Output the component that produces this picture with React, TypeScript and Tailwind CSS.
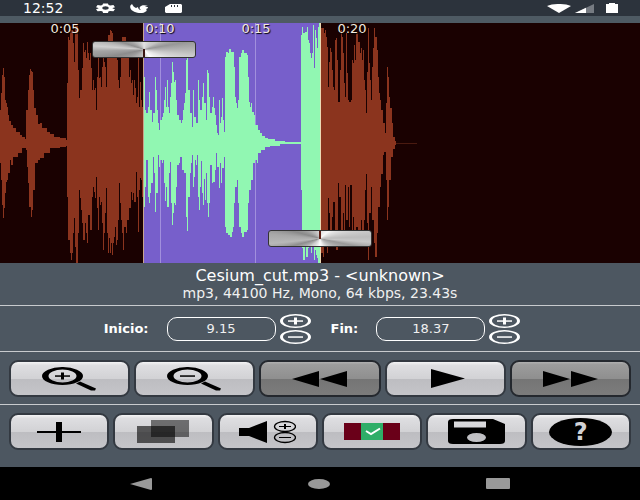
import React, { useState } from "react"
import { clsx } from "clsx"

// Envelope of the recording as "x level" pairs, measured up and down from the centre line
const UPPER =
  "0 33 1 50 2 68 3 75 4 66 5 43 6 40 7 36 8 28 9 22 11 18 13 15 16 11 20 8 22 6 25 4 26 33 28 53 29 68 30 74 31 72 32 71 33 53 34 35 36 28 38 19 40 20 42 15 45 15 47 11 50 9 54 6 60 5 66 3 " +
  "67 60 68 106 69 103 70 114 71 113 73 100 74 81 75 118 76 118 77 118 78 73 79 45 80 53 82 75 83 100 84 91 85 93 86 85 87 101 88 90 89 83 90 90 91 75 92 53 93 63 94 53 95 55 96 33 97 66 98 85 99 65 100 66 101 56 102 76 103 88 104 81 105 76 106 56 107 86 108 108 110 113 111 112 112 110 113 101 115 100 117 83 118 63 119 55 120 66 121 86 122 106 124 106 126 93 128 86 129 66 130 73 131 60 132 63 133 48 134 63 135 55 136 40 137 46 138 91 139 36 140 61 141 43 142 36 " +
  "144 66 145 33 146 30 148 36 149 51 150 33 152 21 153 30 155 66 156 53 157 33 158 20 159 13 160 23 162 26 163 30 164 43 165 56 166 36 167 63 168 36 169 30 170 46 171 60 172 81 173 71 174 61 175 63 176 43 177 28 179 23 181 20 182 23 183 33 184 40 185 50 186 83 187 86 188 53 190 30 192 16 193 53 194 26 196 20 198 63 199 43 200 33 202 46 203 60 204 40 206 23 207 73 208 70 209 46 210 30 212 36 " +
  "213 46 214 35 215 28 216 18 217 10 218 8 219 43 220 20 221 26 222 45 223 23 224 11 225 86 226 91 228 90 229 94 231 91 233 91 234 76 235 46 236 40 237 35 238 43 239 86 241 90 242 93 244 90 247 88 248 66 249 41 250 36 251 40 252 31 254 28 255 18 257 18 258 13 260 10 262 7 265 5 268 4 275 2 285 1 300 1 " +
  "301 108 302 116 303 110 305 111 307 116 308 103 309 100 310 90 311 85 312 90 313 118 314 75 315 113 316 105 317 95 318 116 319 120 " +
  "321 115 323 115 324 110 325 113 326 106 327 96 328 56 329 81 330 95 331 91 332 73 333 56 334 53 335 103 336 105 337 83 338 41 340 73 341 113 342 106 343 90 344 60 345 46 346 110 347 70 348 43 349 41 351 43 352 83 353 80 354 98 355 83 356 110 358 101 360 90 361 95 362 83 363 93 364 63 365 53 366 30 367 71 368 115 369 80 370 63 371 43 372 76 373 95 374 115 375 106 377 93 378 66 379 50 380 43 381 33 383 20 385 10 386 40 387 76 388 66 389 46 390 35 392 20 393 6 395 2"

const LOWER =
  "0 20 1 37 2 62 3 75 4 65 5 50 6 39 7 37 8 30 10 17 11 22 13 14 18 10 22 5 25 5 26 7 27 24 28 40 29 64 31 74 32 67 33 47 35 20 38 17 40 15 44 10 50 5 60 4 66 3 " +
  "67 54 68 97 70 110 71 117 72 110 73 90 74 75 75 104 76 120 77 120 78 90 79 47 80 55 81 67 82 80 83 97 84 97 85 80 86 90 87 100 88 72 90 87 92 54 93 44 94 49 95 55 96 34 97 65 98 87 99 54 100 62 101 59 102 80 103 107 104 90 105 70 106 45 107 90 108 110 109 95 110 110 111 100 112 112 113 100 114 94 115 84 116 102 117 97 118 77 119 40 120 60 121 77 122 90 123 107 124 84 126 90 127 77 128 77 129 65 131 49 132 57 133 50 134 59 136 29 137 54 138 89 139 47 140 35 141 37 142 54 " +
  "144 64 145 44 146 17 148 54 149 60 150 50 151 40 153 14 154 30 155 69 156 50 158 12 159 24 160 17 162 20 163 17 164 40 165 58 166 44 167 64 169 30 170 19 171 60 172 82 173 70 174 60 175 62 176 44 177 22 179 20 180 14 182 27 184 30 186 74 187 88 188 54 190 30 191 20 192 12 193 44 194 34 195 17 196 22 197 12 198 54 199 67 200 44 201 18 202 50 203 62 204 36 205 57 206 30 207 60 208 74 209 60 210 22 212 40 " +
  "213 39 215 27 216 10 217 24 219 45 220 20 221 40 222 25 224 14 225 84 226 90 228 92 230 94 232 89 233 84 234 60 235 44 237 37 238 60 239 84 241 90 242 94 244 89 247 87 248 60 249 47 251 37 252 37 253 20 255 17 257 20 258 10 261 7 265 4 270 3 280 1 300 1 " +
  "301 47 302 105 303 117 305 104 306 114 308 105 309 100 311 110 312 97 313 87 314 117 315 107 316 112 317 115 318 120 320 120 " +
  "321 110 323 114 324 104 326 87 327 110 328 55 329 70 330 90 332 74 333 59 335 97 336 107 338 40 339 54 341 97 343 70 344 87 345 42 346 77 348 44 349 84 350 42 352 90 353 74 354 100 356 84 358 97 361 77 362 97 364 77 365 47 366 31 367 80 368 117 369 70 371 44 372 77 374 100 375 114 377 90 378 64 380 44 381 31 383 12 384 9 386 37 387 77 388 64 389 37 391 14 393 6 395 2"

const envelope = (levels: string, direction: number) => {
  const values = levels.split(" ").map(Number)
  let d = "M0 120"
  for (let i = 0; i < values.length; i += 2) {
    d += `V${120 + direction * values[i + 1]}H${values[i + 2] ?? values[i] + 1}`
  }
  return d + "V120Z"
}

const WAVE = envelope(UPPER, -1) + envelope(LOWER, 1)

const TICKS = [
  { label: "0:05", at: 65 },
  { label: "0:10", at: 160 },
  { label: "0:15", at: 256 },
  { label: "0:20", at: 352 },
]

const percent = (x: number) => `${(x / 640) * 100}%`

function StatusBar() {
  return (
    <header className="flex h-4 items-center bg-[#2c333c] pl-[23px] pr-[22px] text-white">
      <span className="w-[73px] text-sm leading-4">12:52</span>
      <svg className="h-[10px] w-[19px]" viewBox="0 0 24 24" preserveAspectRatio="none" fill="currentColor">
        <path
          fillRule="evenodd"
          d="M9 1h6l1 4 2 1 4-1 2 5-3 2v1l3 2-2 5-4-1-2 1-1 4H9l-1-4-2-1-4 1-2-5 3-2v-1l-3-2 2-5 4 1 2-1zM12 8a4 4 0 1 0 0 8 4 4 0 0 0 0-8z"
        />
      </svg>
      <svg className="ml-[15px] h-[9px] w-[19px]" viewBox="0 0 19 9" fill="currentColor">
        <path d="M2 0C-1 2 0 5 3 7c3 2 9 3 12 1 2-1 2-2 1-3 1 0 2-1 2-2h-3c1-1 2-1 3-1-3-1-7-1-8 1-1 1 0 2 1 3-2 0-3-2-3-3l-2 1C4 3 3 2 2 0z" />
      </svg>
      <svg className="ml-4 h-[9px] w-[17px]" viewBox="0 0 17 9" fill="currentColor">
        <path fillRule="evenodd" d="M5 0h11l1 1v7l-1 1H1L0 8V3zM6 1v2h1V1zM9 1v2h1V1zM12 1v2h1V1z" />
      </svg>
      <svg className="ml-auto h-[9px] w-6" viewBox="0 0 24 9" fill="currentColor">
        <path d="M0 2C6-.7 18-.7 24 2L12 9z" />
      </svg>
      <svg className="ml-1 h-[9px] w-[19px]" viewBox="0 0 19 9">
        <path d="M0 9L19 0v9z" fill="#767b82" />
        <path d="M0 9L11 3.800V9z" fill="#fff" />
      </svg>
      <svg className="ml-3 h-[10px] w-3" viewBox="0 0 12 10" fill="currentColor">
        <path d="M0 1h3V0h6v1h3v9H0z" />
      </svg>
    </header>
  )
}

interface HandleProps {
  at: number
  label: string
  className: string
  notchClassName: string
}

const Handle: React.FC<HandleProps> = ({ at, label, className, notchClassName }) => (
  <button
    type="button"
    aria-label={label}
    style={{ left: percent(at) }}
    className={clsx(
      "absolute flex h-[17px] w-[104px] -translate-x-1/2 justify-center rounded-[3px] border border-[#333]",
      className
    )}
  >
    <span className={clsx("h-2 w-0.5", notchClassName)} />
  </button>
)

function Waveform() {
  return (
    <section className="relative h-60 bg-[#1a0101]">
      <svg
        className="block h-full w-full"
        viewBox="0 0 640 240"
        preserveAspectRatio="none"
        shapeRendering="crispEdges"
      >
        <defs>
          <clipPath id="selection">
            <rect x="144" y="0" width="176" height="240" />
          </clipPath>
        </defs>
        <path d={WAVE} fill="#8b341e" />
        <rect x="396" y="120" width="21" height="1" fill="#4a1a10" />
        <rect x="144" y="0" width="176" height="240" fill="#775fcb" />
        <rect x="160" y="0" width="1" height="240" fill="#a18fdd" />
        <rect x="255" y="0" width="1" height="240" fill="#a18fdd" />
        <path d={WAVE} fill="#91f7b2" clipPath="url(#selection)" />
        <rect x="143" y="0" width="1" height="240" fill="#c9a58c" />
        <rect x="320" y="0" width="1" height="240" fill="#ecd9b4" />
      </svg>
      {TICKS.map((tick) => (
        <span
          key={tick.label}
          style={{ left: percent(tick.at) }}
          className="absolute top-0 -translate-x-1/2 text-[13px] leading-3 text-[#f3e9df] [text-shadow:1px_1px_1px_#000]"
        >
          {tick.label}
        </span>
      ))}
      <Handle
        at={144}
        label="Inicio"
        className="top-[18px] items-end bg-[conic-gradient(#e4e4e4_0deg,#c4c4c4_60deg,#979797_80deg,#b4b4b4_90deg,#cacaca_97deg,#e4e4e4_110deg,#fff_140deg,#ccc_180deg,#aaa_230deg,#8c8c8c_258deg,#a4a4a4_268deg,#d0d0d0_274deg,#b8b8b8_280deg,#909090_288deg,#b4b4b4_310deg,#e4e4e4_360deg)]"
        notchClassName="bg-[#3a1512]"
      />
      <Handle
        at={320}
        label="Fin"
        className="bottom-4 items-start bg-[conic-gradient(#ddd_0deg,#f8f8f8_50deg,#d4d4d4_75deg,#bcbcbc_88deg,#c8c8c8_94deg,#9a9a9a_102deg,#b4b4b4_120deg,#eee_160deg,#fff_180deg,#ccc_230deg,#8e8e8e_255deg,#b8b8b8_264deg,#a8a8a8_275deg,#8a8a8a_285deg,#b0b0b0_310deg,#ddd_360deg)]"
        notchClassName="bg-[#5d1f16]"
      />
    </section>
  )
}

function RoundSign({ plus }: { plus?: boolean }) {
  return (
    <svg className="block h-[14px] w-[31px]" viewBox="0 0 31 14" fill="#fff">
      <path
        fillRule="evenodd"
        d="M0 7a15.500 7 0 1 0 31 0a15.500 7 0 1 0-31 0M3 7a12.500 5.500 0 1 0 25 0a12.500 5.500 0 1 0-25 0"
      />
      <rect x="8" y="6.300" width="15" height="1.500" />
      {plus && <rect x="14" y="3.500" width="3" height="7" />}
    </svg>
  )
}

interface TimeFieldProps {
  id: string
  label: string
  initial: number
}

const TimeField: React.FC<TimeFieldProps> = ({ id, label, initial }) => {
  const [value, setValue] = useState(initial.toFixed(2))

  const step = (amount: number) => setValue((Number(value) + amount).toFixed(2))

  return (
    <div className="flex items-center">
      <label htmlFor={id} className="mr-[18px] text-[13px] font-bold">
        {label}
      </label>
      <input
        id={id}
        type="text"
        inputMode="decimal"
        value={value}
        onChange={(e) => setValue(e.target.value)}
        className="h-6 w-[109px] rounded-[10px] border border-white bg-transparent text-center text-[13px] text-[#f0f0f0]"
      />
      <div className="ml-1 flex flex-col gap-0.5">
        <button type="button" aria-label={`${label} +`} onClick={() => step(0.01)}>
          <RoundSign plus />
        </button>
        <button type="button" aria-label={`${label} -`} onClick={() => step(-0.01)}>
          <RoundSign />
        </button>
      </div>
    </div>
  )
}

interface ToolButtonProps {
  label: string
  disabled?: boolean
  children: React.ReactNode
}

const ToolButton: React.FC<ToolButtonProps> = ({ label, disabled, children }) => (
  <button
    type="button"
    aria-label={label}
    disabled={disabled}
    className={clsx(
      "flex h-[37px] flex-1 items-center justify-center rounded-[9px] border-2 text-black",
      disabled
        ? "border-[#24282e] bg-[linear-gradient(#b0b0b0_0%,#9c9c9c_8%,#8f8f8f_50%,#757575_51%,#7c7c7c_100%)]"
        : "border-[#333941] bg-[linear-gradient(#f4f4f5_0%,#dedee1_10%,#d2d2d5_50%,#bdbdc1_51%,#c5c5c9_100%)]"
    )}
  >
    {children}
  </button>
)

function Magnifier({ plus }: { plus?: boolean }) {
  return (
    <svg className="h-6 w-[55px]" viewBox="0 0 55 24">
      <path
        fillRule="evenodd"
        d="M0 9a20.500 9 0 1 0 41 0a20.500 9 0 1 0-41 0M6.500 9a14 6.500 0 1 0 28 0a14 6.500 0 1 0-28 0"
      />
      <path d="M34 16.500l4-2 16 7-1 2h-4z" />
      <rect x="13" y="8.300" width="15" height="1.500" />
      {plus && <rect x="19" y="5.500" width="3" height="7" />}
    </svg>
  )
}

function SoundIcon() {
  return (
    <svg className="h-6 w-[57px]" viewBox="0 0 57 24">
      <path d="M0 8h10L28 1v22L10 16H0z" />
      <g fill="none" stroke="#000">
        <ellipse cx="46" cy="6.500" rx="10.500" ry="5" strokeWidth="1.300" />
        <ellipse cx="46" cy="17.500" rx="10.500" ry="5" strokeWidth="1.300" />
        <path d="M40 6.500h12M40 17.500h12" strokeWidth="1.200" />
        <path d="M46 4v5" strokeWidth="2" />
      </g>
    </svg>
  )
}

export default function App() {
  return (
    <main className="flex min-h-screen flex-col bg-[#4d5761] font-['DejaVu_Sans',sans-serif] text-white">
      <StatusBar />
      <div className="h-[7px] bg-[#4e5a63]" />
      <Waveform />

      <section className="flex h-[43px] flex-col items-center border-b border-[#c8cbce] pt-[5px]">
        <h1 className="text-base leading-4">Cesium_cut.mp3 - &lt;unknown&gt;</h1>
        <p className="text-sm leading-[18px] text-[#f0f0f0]">mp3, 44100 Hz, Mono, 64 kbps, 23.43s</p>
      </section>

      <form className="flex h-[46px] items-center justify-center gap-5 border-b border-[#c8cbce] pr-4">
        <TimeField id="inicio" label="Inicio:" initial={9.15} />
        <TimeField id="fin" label="Fin:" initial={18.37} />
      </form>

      <div className="flex gap-1 border-b border-[#c8cbce] px-[9px] pb-[7px] pt-2">
        <ToolButton label="Acercar">
          <Magnifier plus />
        </ToolButton>
        <ToolButton label="Alejar">
          <Magnifier />
        </ToolButton>
        <ToolButton label="Retroceder" disabled>
          <svg className="h-4 w-14" viewBox="0 0 56 16">
            <path d="M0 8L27 0v16zM28 8L55 0v16z" />
          </svg>
        </ToolButton>
        <ToolButton label="Reproducir">
          <svg className="h-[19px] w-10" viewBox="0 0 40 19">
            <path d="M6 0l34 9.500L6 19z" />
          </svg>
        </ToolButton>
        <ToolButton label="Avanzar" disabled>
          <svg className="h-4 w-14" viewBox="0 0 56 16">
            <path d="M1 0l27 8-27 8zM29 0l27 8-27 8z" />
          </svg>
        </ToolButton>
      </div>

      <div className="flex gap-1 px-[9px] pb-[17px] pt-2">
        <ToolButton label="Nuevo">
          <svg className="h-5 w-11" viewBox="0 0 44 20">
            <path d="M0 9h19V0h6v9h19v2H25v9h-6v-9H0z" />
          </svg>
        </ToolButton>
        <ToolButton label="Copiar">
          <svg className="h-6 w-[52px]" viewBox="0 0 52 24" fillOpacity="0.5">
            <rect x="14" y="0" width="38" height="17" />
            <rect x="0" y="6" width="38" height="17" fillOpacity="0.6" />
          </svg>
        </ToolButton>
        <ToolButton label="Volumen">
          <SoundIcon />
        </ToolButton>
        <ToolButton label="Recortar">
          <svg className="h-[17px] w-14" viewBox="0 0 56 17">
            <rect width="56" height="17" fill="#6a0019" />
            <rect x="17" width="22" height="17" fill="#2fae68" />
            <path d="M22 8l5 3 9-5.500" fill="none" stroke="#fff" strokeWidth="2" />
          </svg>
        </ToolButton>
        <ToolButton label="Guardar">
          <svg className="h-[25px] w-[57px]" viewBox="0 0 57 25">
            <path
              fillRule="evenodd"
              d="M5 0h40l12 5v17q0 3-5 3H5q-5 0-5-3V3q0-3 5-3zM6 2.500v6h32v-6zM19 18.500a9.500 4.500 0 1 0 19 0a9.500 4.500 0 1 0-19 0"
            />
          </svg>
        </ToolButton>
        <ToolButton label="Ayuda">
          <span className="flex h-7 w-[63px] items-center justify-center rounded-[50%] bg-black text-2xl font-bold text-[#d2d2d5]">
            ?
          </span>
        </ToolButton>
      </div>

      <nav className="flex min-h-[33px] flex-1 items-center justify-between bg-black px-[130px]">
        <button type="button" aria-label="Atrás">
          <svg className="block h-3 w-[22px]" viewBox="0 0 22 12" fill="#999">
            <path d="M0 6L21 0q1 0 1 1v10q0 1-1 1z" />
          </svg>
        </button>
        <button type="button" aria-label="Inicio" className="h-[10px] w-[22px] rounded-[50%] bg-[#999]" />
        <button type="button" aria-label="Recientes" className="h-[11px] w-6 rounded-[1px] bg-[#999]" />
      </nav>
    </main>
  )
}
